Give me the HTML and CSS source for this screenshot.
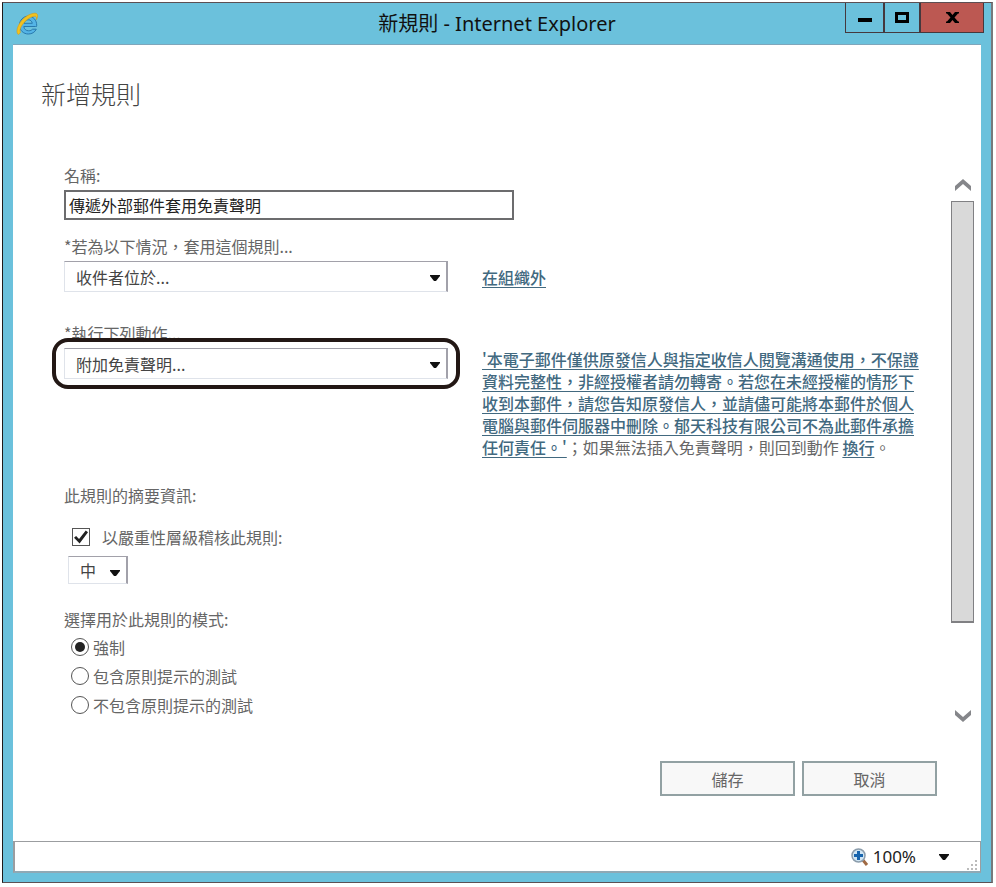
FILE: index.html
```html
<!DOCTYPE html>
<html lang="zh-Hant">
<head>
<meta charset="utf-8">
<meta name="viewport" content="width=device-width, initial-scale=1">
<title>新規則 - Internet Explorer</title>
<link rel="stylesheet" href="styles.css">
</head>
<body>
<div class="window">
  <header class="titlebar">
    <svg class="app-icon" viewBox="0 0 24 24" aria-hidden="true">
      <path d="M20.5 14.5H8.8c.3 2.6 2.2 4.3 4.8 4.3 1.800 0 3-.6 4-1.600h3.700c-1.400 3-4.300 4.800-8 4.800C8.400 22 4.500 18.300 4.500 13.200S8.400 4.200 13.200 4.200c5.200 0 8.500 4 8.500 9 0 .6 0 1-.2 1.300zM9 11.300h8.300c-.4-2.200-2-3.500-4.100-3.500S9.500 9.100 9 11.300z" fill="#54b4e6" stroke="#2879ad" stroke-width="1"/>
      <path d="M3.200 22.500C-1 18.500 6 5.500 15.500 2.200c3.500-1.300 6-1.500 6.800.2.700 1.500.1 3.500-.9 5.300.3-2 .1-3.300-1.100-3.500C14.500 3.300 3 14.500 5.300 20.500c-.5.800-1.200 1.600-2.100 2z" fill="#f2c21f" stroke="#d99a10" stroke-width=".6"/>
    </svg>
    <span class="window-title">新規則 - Internet Explorer</span>
    <div class="window-controls">
      <button class="control minimize" type="button" aria-label="最小化"><svg width="14" height="4" viewBox="0 0 14 4"><path d="M0 0h14v4H0z"/></svg></button>
      <button class="control maximize" type="button" aria-label="最大化"><svg width="14" height="11" viewBox="0 0 14 11"><path d="M0 0h14v11H0zM3 3v5h8V3z" fill-rule="evenodd"/></svg></button>
      <button class="control close" type="button" aria-label="關閉"><svg width="13" height="11" viewBox="0 0 13 11"><path d="M0 0h4l2.500 3L9 0h4v1.500h-1L8.500 5.500l3.500 4h1V11H9L6.500 8 4 11H0V9.500h1l3.500-4L1 1.500H0z"/></svg></button>
    </div>
  </header>

  <main class="page">
    <h1 class="heading">新增規則</h1>
    <div class="scroll-area">
      <form class="form" id="rule-form">
        <label class="label" for="name">名稱:</label>
        <input class="text-box" id="name" type="text" value="傳遞外部郵件套用免責聲明">

        <div class="rule">
          <label class="label" for="condition">*若為以下情況，套用這個規則...</label>
          <span class="dropdown">
            <select id="condition"><option>收件者位於...</option></select>
            <svg class="caret" viewBox="0 0 10 6" aria-hidden="true"><path d="M0 0h10v1L6 6H4L0 1z"/></svg>
          </span>
          <p class="detail single"><a href="#">在組織外</a></p>
        </div>

        <div class="rule action">
          <label class="label" for="action">*執行下列動作...</label>
          <span class="dropdown highlighted">
            <select id="action"><option>附加免責聲明...</option></select>
            <svg class="caret" viewBox="0 0 10 6" aria-hidden="true"><path d="M0 0h10v1L6 6H4L0 1z"/></svg>
          </span>
          <p class="detail"><a href="#">'本電子郵件僅供原發信人與指定收信人閱覽溝通使用，不保證<br>資料完整性，非經授權者請勿轉寄。若您在未經授權的情形下<br>收到本郵件，請您告知原發信人，並請儘可能將本郵件於個人<br>電腦與郵件伺服器中刪除。郁天科技有限公司不為此郵件承擔<br>任何責任。'</a>；如果無法插入免責聲明，則回到動作 <a href="#">換行</a>。</p>
        </div>

        <p class="label">此規則的摘要資訊:</p>
        <div class="audit">
          <input id="audit" type="checkbox" checked>
          <label for="audit">以嚴重性層級稽核此規則:</label>
        </div>
        <span class="dropdown severity">
          <select aria-label="嚴重性層級"><option>中</option></select>
          <svg class="caret" viewBox="0 0 10 6" aria-hidden="true"><path d="M0 0h10v1L6 6H4L0 1z"/></svg>
        </span>

        <fieldset class="modes">
          <legend class="label">選擇用於此規則的模式:</legend>
          <div class="mode"><input id="enforce" name="mode" type="radio" checked><label for="enforce">強制</label></div>
          <div class="mode"><input id="test-tips" name="mode" type="radio"><label for="test-tips">包含原則提示的測試</label></div>
          <div class="mode"><input id="test" name="mode" type="radio"><label for="test">不包含原則提示的測試</label></div>
        </fieldset>
      </form>
      <div class="scrollbar" aria-hidden="true">
        <svg class="arrow" viewBox="0 0 16 12"><path d="M8 0l8 7v5L8 5 0 12V7z"/></svg>
        <div class="track"><div class="thumb"></div></div>
        <svg class="arrow" viewBox="0 0 16 12"><path d="M8 12l8-7V0L8 7 0 0v5z"/></svg>
      </div>
    </div>
    <div class="actions">
      <button class="button" type="submit" form="rule-form">儲存</button>
      <button class="button" type="button">取消</button>
    </div>
  </main>

  <footer class="statusbar">
    <button class="zoom" type="button">
      <svg class="zoom-icon" viewBox="0 0 18 18" aria-hidden="true">
        <path d="M11 11l5 6" stroke="#a06a43" stroke-width="3"/>
        <circle cx="7.500" cy="7.500" r="6.500" fill="#cfe5f4" stroke="#8b9cab" stroke-width="1.500"/>
        <path d="M6 3h3v3h3v3H9v3H6V9H3V6h3z" fill="#1764ad"/>
      </svg>
      <span>100%</span>
      <svg class="caret" viewBox="0 0 10 6" aria-hidden="true"><path d="M0 0h10v1L6 6H4L0 1z"/></svg>
    </button>
    <svg class="grip" viewBox="0 0 11 11" aria-hidden="true"><path d="M8 0h2v2H8zM4 4h2v2H4zM8 4h2v2H8zM0 8h2v2H0zM4 8h2v2H4zM8 8h2v2H8z"/></svg>
  </footer>
</div>
</body>
</html>
```
FILE: styles.css
```css
* {
  box-sizing: border-box;
}

body {
  display: flex;
  min-height: 100vh;
  margin: 0;
  padding: 2px 3px 4px 2px;
  background: #fff;
  color: #666;
  font: 16px/22px "Noto Sans CJK TC", sans-serif;
}

input, select, button {
  margin: 0;
  font: inherit;
  color: inherit;
}

p {
  margin: 0;
}

.window {
  flex: 1;
  display: flex;
  flex-direction: column;
  padding: 0 10px 9px;
  border: 1px solid #1f1a1b;
  border-top-color: #5c4f53;
  border-right: 2px solid #77797c;
  border-bottom-color: #5c5053;
  background: #6bc1dc;
}

.titlebar {
  display: grid;
  grid-template-columns: 1fr auto 1fr;
  align-items: center;
  height: 42px;
  border-bottom: 1px solid #7fa6bb;
}

.app-icon {
  width: 24px;
  height: 24px;
  margin-left: 2px;
}

.window-title {
  color: #111;
  font: 20px/28px "Noto Sans", "Noto Sans CJK TC", sans-serif;
}

.window-controls {
  display: flex;
  align-self: start;
  justify-self: end;
  height: 30px;
  margin-right: -3px;
  border: 1px solid #45383d;
  border-top: 0;
}

.control {
  display: flex;
  align-items: center;
  justify-content: center;
  padding: 0;
  border: 0;
  background: #6bc1dc;
}

.control + .control {
  border-left: 2px solid #45383d;
}

.minimize {
  width: 37px;
  padding-top: 5px;
}

.maximize {
  width: 36px;
}

.close {
  width: 64px;
  background: #bc5852;
}

.page {
  flex: 1;
  display: flex;
  flex-direction: column;
  padding: 32px 7px 45px 28px;
  background: #fff;
}

.heading {
  margin: 0 0 55px;
  color: #444;
  font-size: 25px;
  font-weight: 300;
  line-height: 32px;
}

.scroll-area {
  flex: 1;
  display: flex;
  gap: 16px;
}

.form {
  flex: 1;
  padding-left: 23px;
}

.label {
  display: block;
  padding: 0;
}

.text-box {
  display: block;
  width: 100%;
  max-width: 450px;
  height: 30px;
  margin: 4px 0 15px;
  padding: 0 3px;
  border: 2px solid #6c6c6e;
  background: #fff;
  color: #222;
}

.rule {
  display: grid;
  grid-template-columns: 384px 1fr;
  gap: 4px 34px;
}

.rule .label {
  grid-column: 1 / -1;
}

.action {
  margin: 30px 0 26px;
}

.detail {
  white-space: nowrap;
}

.single {
  align-self: center;
}

a {
  color: #42697f;
  font-weight: 500;
  text-underline-offset: 3px;
}

.dropdown {
  position: relative;
  display: block;
  height: 31px;
}

.dropdown select {
  appearance: none;
  display: block;
  width: 100%;
  height: 100%;
  padding: 0 28px 0 11px;
  border: 1px solid #dfe3ea;
  border-top-color: #a2a1aa;
  border-right: 2px solid #a2a1aa;
  border-radius: 0;
  background: #fff;
  color: #444;
}

.caret {
  width: 10px;
  height: 6px;
  fill: #111;
}

.dropdown .caret {
  position: absolute;
  top: 14px;
  right: 8px;
  pointer-events: none;
}

.highlighted::after {
  content: "";
  position: absolute;
  inset: -10px -12px;
  border: 4px solid #231815;
  border-radius: 16px;
  pointer-events: none;
}

.audit {
  display: flex;
  align-items: center;
  gap: 12px;
  margin: 20px 0 8px;
  padding-left: 8px;
}

input[type="checkbox"],
input[type="radio"] {
  appearance: none;
  display: grid;
  place-items: center;
  width: 18px;
  height: 18px;
  border: 1px solid #555;
  background: #fff;
}

input[type="radio"] {
  border-radius: 50%;
}

input[type="checkbox"]:checked::before {
  content: "";
  width: 14px;
  height: 14px;
  background: #222;
  clip-path: polygon(0 55%, 15% 42%, 36% 65%, 84% 4%, 100% 16%, 40% 96%);
}

input[type="radio"]:checked::before {
  content: "";
  width: 10px;
  height: 10px;
  border-radius: 50%;
  background: #222;
}

.severity {
  width: 60px;
  height: 28px;
  margin-left: 4px;
}

.modes {
  margin: 24px 0 0;
  padding: 0;
  border: 0;
}

.modes .label {
  margin-bottom: 2px;
}

.mode {
  display: flex;
  align-items: center;
  gap: 4px;
  height: 29px;
  padding-left: 7px;
}

.scrollbar {
  display: flex;
  flex-direction: column;
  align-items: center;
  width: 23px;
  padding: 15px 0 8px;
}

.arrow {
  width: 16px;
  height: 12px;
  fill: #85868a;
}

.track {
  flex: 1;
  display: flex;
  flex-direction: column;
  width: 100%;
  margin: 10px 0 8px;
}

.thumb {
  flex: 422;
  border: 1px solid #808083;
  border-bottom-width: 2px;
  background: #d9d9d9;
}

.track::after {
  content: "";
  flex: 79;
}

.actions {
  display: flex;
  justify-content: flex-end;
  gap: 7px;
  margin: 31px 37px 0 0;
}

.button {
  width: 135px;
  height: 35px;
  padding: 0;
  border: 2px solid #92a1a3;
  background: #f8f8f8;
}

.statusbar {
  display: flex;
  align-items: center;
  justify-content: flex-end;
  gap: 18px;
  height: 32px;
  padding-right: 2px;
  border: 1px solid #9b9da0;
  border-left-width: 2px;
  border-bottom: 2px solid #8fa9b5;
  background: #fff;
}

.zoom {
  display: flex;
  align-items: center;
  padding: 0;
  border: 0;
  background: none;
  color: #222;
  font: 17px/24px "Noto Sans", sans-serif;
}

.zoom-icon {
  width: 18px;
  height: 18px;
  margin-right: 4px;
}

.zoom .caret {
  margin-left: 23px;
}

.grip {
  align-self: flex-end;
  width: 11px;
  height: 11px;
  fill: #bbb;
}
```
